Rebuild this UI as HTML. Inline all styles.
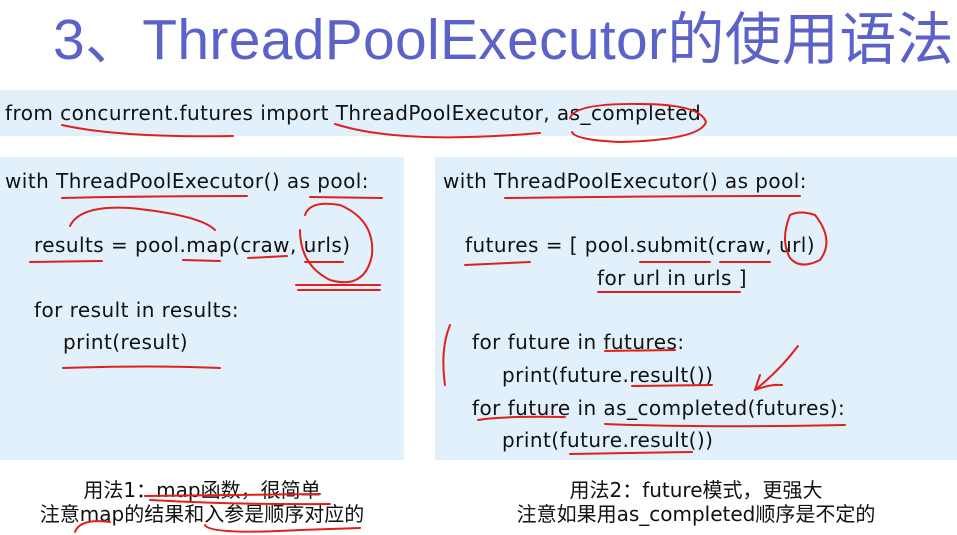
<!DOCTYPE html>
<html><head><meta charset="utf-8"><style>
body{margin:0;width:957px;height:535px;background:#fff;position:relative;overflow:hidden;font-family:"DejaVu Sans","Noto Sans CJK SC",sans-serif;}
.t{position:absolute;left:53px;top:-6px;font-family:"Liberation Sans","Noto Sans CJK SC",sans-serif;font-size:57px;color:#5b63c8;white-space:nowrap;letter-spacing:0.3px}
.box{position:absolute;background:#e1f0fb}
.c{position:absolute;font-size:20px;color:#111;white-space:nowrap;letter-spacing:0.45px}
.n{position:absolute;font-size:20px;color:#111;white-space:nowrap;text-align:center;font-family:"DejaVu Sans","Noto Sans CJK SC",sans-serif}
svg{position:absolute;left:0;top:0}
</style></head><body>
<div class="t">3、ThreadPoolExecutor的使用语法</div>
<div class="box" style="left:0;top:90px;width:957px;height:46px"></div>
<div class="box" style="left:0;top:157px;width:404px;height:303px"></div>
<div class="box" style="left:435px;top:157px;width:522px;height:303px"></div>
<div class="c" style="left:5px;top:101px">from concurrent.futures import ThreadPoolExecutor, as_completed</div>
<div class="c" style="left:5px;top:169px">with ThreadPoolExecutor() as pool:</div>
<div class="c" style="left:34px;top:233px">results = pool.map(craw, urls)</div>
<div class="c" style="left:34px;top:298px">for result in results:</div>
<div class="c" style="left:63px;top:330px">print(result)</div>
<div class="c" style="left:443px;top:169px">with ThreadPoolExecutor() as pool:</div>
<div class="c" style="left:465px;top:233px">futures = [ pool.submit(craw, url)</div>
<div class="c" style="left:597px;top:266px">for url in urls ]</div>
<div class="c" style="left:472px;top:330px">for future in futures:</div>
<div class="c" style="left:502px;top:363px">print(future.result())</div>
<div class="c" style="left:472px;top:396px">for future in as_completed(futures):</div>
<div class="c" style="left:502px;top:428px">print(future.result())</div>
<div class="n" style="left:0;width:404px;top:474px">用法1：map函数，很简单</div>
<div class="n" style="left:0;width:404px;top:498px">注意map的结果和入参是顺序对应的</div>
<div class="n" style="left:435px;width:522px;top:474px">用法2：future模式，更强大</div>
<div class="n" style="left:435px;width:522px;top:498px">注意如果用as_completed顺序是不定的</div>
<svg width="957" height="535" fill="none" stroke="#e0201a" stroke-width="2" stroke-linecap="round">
<path d="M62 125 Q120 138 233 136"/>
<path d="M335 124 Q400 145 540 133"/>
<path d="M570 118 Q575 103 640 104 Q700 104 706 122 Q700 140 620 142 Q575 140 572 132"/>
<path d="M62 198 Q150 196 247 196"/>
<path d="M310 197 L382 198"/>
<path d="M70 226 Q80 205 130 208 Q200 215 215 230"/>
<path d="M30 262 L102 261"/>
<path d="M183 260 L220 261"/>
<path d="M248 258 L287 256"/>
<path d="M305 262 L343 262"/>
<path d="M305 215 Q310 200 340 205 Q375 220 372 255 Q365 290 330 280 Q300 265 300 230"/>
<path d="M296 285 L380 285 M298 290 L380 290"/>
<path d="M63 368 Q150 365 220 368"/>
<path d="M505 198 Q650 196 800 196"/>
<path d="M465 265 L530 262"/>
<path d="M640 262 L710 262"/>
<path d="M720 262 L770 262"/>
<path d="M598 292 L740 292"/>
<path d="M790 215 Q800 210 815 215 Q835 240 820 260 Q800 270 790 258 Q780 240 790 215"/>
<path d="M450 325 Q440 350 445 385"/>
<path d="M605 351 L675 350"/>
<path d="M632 386 L712 385"/>
<path d="M798 346 Q780 370 755 390 M755 390 Q770 384 782 385 M755 390 L760 375"/>
<path d="M478 420 Q500 416 565 417"/>
<path d="M605 424 Q700 428 845 425"/>
<path d="M570 454 L692 452"/>
<path d="M145 496 L320 494"/>
<path d="M150 500 Q240 505 330 504"/>
<path d="M75 532 Q80 518 110 522"/>
<path d="M205 525 Q210 535 300 530 L360 528"/>
</svg>
</body></html>
